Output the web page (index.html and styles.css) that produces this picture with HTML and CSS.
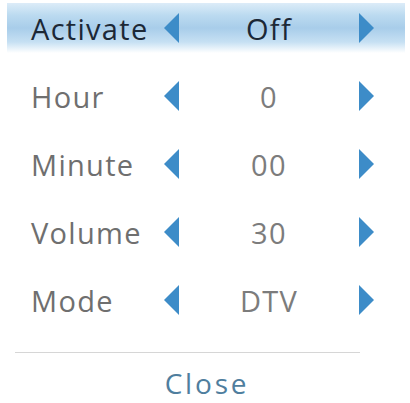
FILE: index.html
```html
<!DOCTYPE html>
<html>
<head>
<meta charset="utf-8">
<link rel="stylesheet" href="styles.css">
</head>
<body>
<div class="menu">
  <div class="list">
    <div class="row active">
      <span class="label">Activate</span>
      <svg class="arrow" viewBox="0 0 17 30"><polygon points="16,0 16,30 1,15"/></svg>
      <span class="value">Off</span>
      <svg class="arrow" viewBox="0 0 17 30"><polygon points="1,0 1,30 16,15"/></svg>
    </div>
    <div class="row">
      <span class="label">Hour</span>
      <svg class="arrow" viewBox="0 0 17 30"><polygon points="16,0 16,30 1,15"/></svg>
      <span class="value">0</span>
      <svg class="arrow" viewBox="0 0 17 30"><polygon points="1,0 1,30 16,15"/></svg>
    </div>
    <div class="row">
      <span class="label">Minute</span>
      <svg class="arrow" viewBox="0 0 17 30"><polygon points="16,0 16,30 1,15"/></svg>
      <span class="value">00</span>
      <svg class="arrow" viewBox="0 0 17 30"><polygon points="1,0 1,30 16,15"/></svg>
    </div>
    <div class="row">
      <span class="label">Volume</span>
      <svg class="arrow" viewBox="0 0 17 30"><polygon points="16,0 16,30 1,15"/></svg>
      <span class="value">30</span>
      <svg class="arrow" viewBox="0 0 17 30"><polygon points="1,0 1,30 16,15"/></svg>
    </div>
    <div class="row">
      <span class="label">Mode</span>
      <svg class="arrow" viewBox="0 0 17 30"><polygon points="16,0 16,30 1,15"/></svg>
      <span class="value">DTV</span>
      <svg class="arrow" viewBox="0 0 17 30"><polygon points="1,0 1,30 16,15"/></svg>
    </div>
  </div>
  <div class="divider"></div>
  <div class="close">Close</div>
</div>
</body>
</html>
```
FILE: styles.css
```css
html, body {
  margin: 0;
  padding: 0;
  background: #ffffff;
}
body {
  width: 410px;
  height: 403px;
  overflow: hidden;
  font-family: "Open Sans", "Liberation Sans", sans-serif;
}
.menu {
  display: flex;
  flex-direction: column;
}
.list {
  display: flex;
  flex-direction: column;
  gap: 18px;
  padding: 3px 5px 0 7px;
}
.row {
  height: 50px;
  display: grid;
  grid-template-columns: 132px 17px 178px 17px;
  align-items: center;
  padding-left: 24px;
  font-size: 29px;
  letter-spacing: 1.3px;
  color: #6f6f6f;
}
.row.active {
  background: linear-gradient(to bottom, #dcecf8 0%, #bbdaf0 25%, #a8cdea 50%, #c6e0f3 78%, #ffffff 100%);
  color: #1c2836;
}
.label {
  white-space: nowrap;
}
.value {
  text-align: center;
  color: #7c7c7c;
}
.row.active .value {
  color: #1c2836;
}
.arrow {
  width: 17px;
  height: 30px;
  fill: #3d8cc8;
}
.divider {
  margin: 27px 0 0 15px;
  width: 345px;
  height: 1px;
  background: #d6d6d6;
}
.close {
  text-align: center;
  font-size: 28px;
  line-height: 28px;
  letter-spacing: 2.8px;
  color: #4f7e9e;
  margin-top: 16px;
  padding-left: 4px;
}
```
